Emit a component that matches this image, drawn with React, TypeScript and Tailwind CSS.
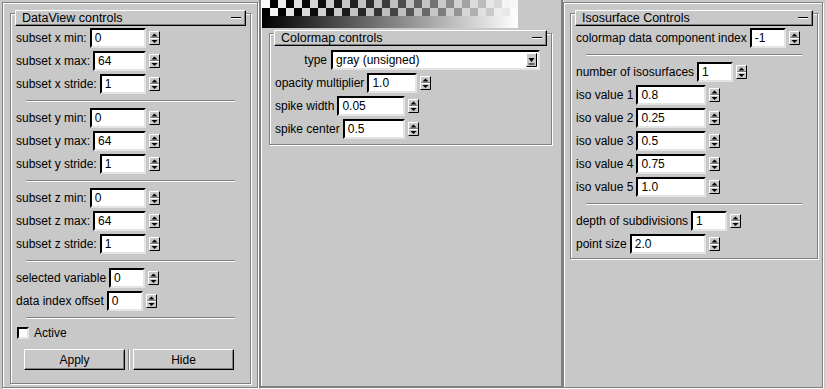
import React from 'react'

const groove = 'border border-[#808080] shadow-[inset_1px_1px_0_#fff,1px_1px_0_#fff]'
const raised = 'border border-t-white border-l-white border-r-black border-b-black shadow-[inset_-1px_-1px_0_#808080]'
const sunken = 'border-2 border-t-black border-l-black border-r-[#e4e4e4] border-b-[#e4e4e4] bg-white'

type RowDef = { label: string; value: string; w?: string }

const Spinner = () => (
  <svg width="11" height="14" viewBox="0 0 11 14" className="ml-[3px] shrink-0">
    <rect x="0" y="0" width="11" height="14" fill="#c8c8c8" />
    <path d="M0.5 13.5V0.5H10.5" stroke="#fff" fill="none" />
    <path d="M0.5 13.5H10.5V0.5" stroke="#000" fill="none" />
    <path d="M1 6.5H10" stroke="#808080" />
    <path d="M1 7.5H10" stroke="#fff" />
    <path d="M2.5 5.5L5.5 2.5L8.5 5.5Z" fill="#000" />
    <path d="M2.5 9L8.5 9L5.5 12Z" fill="#000" />
  </svg>
)

const Field = ({ value, className }: { value: string; className: string }) => (
  <div className={`h-[20px] ${sunken} pl-[3px] leading-[16px] ${className}`}>{value}</div>
)

const Row = ({ row }: { row: RowDef }) => (
  <div className="flex h-[20px] items-center">
    {row.w ? (
      <>
        <span className="whitespace-nowrap">{row.label}</span>
        <Field value={row.value} className={`ml-[3px] ${row.w}`} />
      </>
    ) : (
      <div className="flex w-[130px] items-center">
        <span className="whitespace-nowrap">{row.label}</span>
        <Field value={row.value} className="ml-[3px] min-w-0 flex-1" />
      </div>
    )}
    <Spinner />
  </div>
)

const Rows = ({ rows }: { rows: RowDef[] }) => (
  <div className="flex flex-col gap-[3px]">
    {rows.map((r) => (
      <Row key={r.label} row={r} />
    ))}
  </div>
)

// etched horizontal rule between groups of fields
const Sep = () => <div className="ml-[10px] mr-[15px] my-[6px] h-[2px] border-t border-b border-t-[#808080] border-b-white" />

const Title = ({ text }: { text: string }) => (
  <div className={`-mt-[4px] mx-[4px] flex h-[16px] items-center justify-between pl-[6px] pr-[4px] bg-[#c8c8c8] ${raised}`}>
    <span className="text-[12.5px]">{text}</span>
    <div className="h-[2px] w-[10px] border-t border-b border-t-black border-b-white" />
  </div>
)

const Colormap = () => {
  const cells: React.ReactNode[] = []
  for (let i = 0; i < 32; i++) {
    const g = (i * 8 + 4) / 256
    for (let r = 0; r < 2; r++) {
      const ch = (i + r) % 2 === 0 ? 1 : 0
      const v = Math.round((g * g + ch * (1 - g)) * 255)
      cells.push(<rect key={`${i}-${r}`} x={i * 8} y={r * 8} width="8" height="8" fill={`rgb(${v},${v},${v})`} />)
    }
  }
  return (
    <svg width="256" height="28" viewBox="0 0 256 28" className="block">
      <defs>
        <linearGradient id="cmap" x1="0" x2="1" y1="0" y2="0">
          <stop offset="0" stopColor="#000" />
          <stop offset="1" stopColor="#fff" />
        </linearGradient>
      </defs>
      {cells}
      <rect x="0" y="16" width="256" height="12" fill="url(#cmap)" />
    </svg>
  )
}

const xRows: RowDef[] = [
  { label: 'subset x min:', value: '0' },
  { label: 'subset x max:', value: '64' },
  { label: 'subset x stride:', value: '1' },
]
const yRows: RowDef[] = [
  { label: 'subset y min:', value: '0' },
  { label: 'subset y max:', value: '64' },
  { label: 'subset y stride:', value: '1' },
]
const zRows: RowDef[] = [
  { label: 'subset z min:', value: '0' },
  { label: 'subset z max:', value: '64' },
  { label: 'subset z stride:', value: '1' },
]
const varRows: RowDef[] = [
  { label: 'selected variable', value: '0', w: 'w-[36px]' },
  { label: 'data index offset', value: '0', w: 'w-[36px]' },
]

const isoRows: RowDef[] = [
  { label: 'number of isosurfaces', value: '1', w: 'w-[36px]' },
  { label: 'iso value 1', value: '0.8' },
  { label: 'iso value 2', value: '0.25' },
  { label: 'iso value 3', value: '0.5' },
  { label: 'iso value 4', value: '0.75' },
  { label: 'iso value 5', value: '1.0' },
]

const cmapRows: RowDef[] = [
  { label: 'opacity multiplier', value: '1.0', w: 'w-[50px]' },
  { label: 'spike width', value: '0.05' },
  { label: 'spike center', value: '0.5' },
]

export default function App() {
  return (
    <div className="flex h-[389px] w-[825px] overflow-hidden bg-[#c8c8c8] font-['Liberation_Sans',Arial,sans-serif] text-[12px] leading-none text-black">
      {/* dataview */}
      <div className="w-[259px] shrink-0 pl-[2px] pr-[1px] pt-[2px] pb-[1px]">
        <div className={`h-full ${groove} pt-[10px]`}>
          <div className={`ml-[7px] h-[371px] w-[241px] ${groove}`}>
            <Title text="DataView controls" />
            <div className="mt-[2px] flex flex-col pl-[5px]">
              <Rows rows={xRows} />
              <Sep />
              <Rows rows={yRows} />
              <Sep />
              <Rows rows={zRows} />
              <Sep />
              <Rows rows={varRows} />
              <Sep />
              <div className="flex h-[16px] items-center">
                <div className={`ml-[1px] h-[12px] w-[12px] ${sunken}`} />
                <span className="ml-[5px]">Active</span>
              </div>
              <div className="mt-[8px] ml-[8px] flex h-[21px] items-stretch">
                <div className={`flex w-[101px] items-center justify-center ${raised}`}>Apply</div>
                <div className="mx-[3px] w-[2px] border-l border-r border-l-[#808080] border-r-white" />
                <div className={`flex w-[101px] items-center justify-center ${raised}`}>Hide</div>
              </div>
            </div>
          </div>
        </div>
      </div>

      {/* colormap */}
      <div className="w-[304px] shrink-0 pb-[1px]">
        <div className="h-full border-2 border-t-0 border-[#808080] shadow-[inset_1px_0_0_#fff,1px_1px_0_#fff]">
          <div className="ml-[1px]">
            <Colormap />
          </div>
          <div className={`mt-[5px] ml-[8px] h-[112px] w-[283px] ${groove}`}>
            <Title text="Colormap controls" />
            <div className="mt-[4px] flex flex-col gap-[3px] pl-[5px]">
              <div className="flex h-[20px] items-center">
                <span className="w-[52px] text-right">type</span>
                <div className={`ml-[4px] flex h-[20px] w-[209px] items-center justify-between ${sunken} pl-[3px] pr-[1px]`}>
                  <span>gray (unsigned)</span>
                  <svg width="11" height="14" viewBox="0 0 11 14">
                    <rect x="0" y="0" width="11" height="14" fill="#c8c8c8" />
                    <path d="M0.5 13.5V0.5H10.5" stroke="#fff" fill="none" />
                    <path d="M0.5 13.5H10.5V0.5" stroke="#000" fill="none" />
                    <path d="M2.5 5L8.5 5L5.5 9Z" fill="#000" />
                    <path d="M2.5 11H8.5" stroke="#000" />
                  </svg>
                </div>
              </div>
              <Rows rows={cmapRows} />
            </div>
          </div>
        </div>
      </div>

      {/* isosurface */}
      <div className="w-[262px] shrink-0 pt-[2px] pr-[2px] pb-[1px]">
        <div className={`h-full ${groove} pt-[10px]`}>
          <div className={`ml-[6px] h-[246px] w-[248px] ${groove}`}>
            <Title text="Isosurface Controls" />
            <div className="mt-[2px] flex flex-col pl-[5px]">
              <Row row={{ label: 'colormap data component index', value: '-1', w: 'w-[36px]' }} />
              <Sep />
              <Rows rows={isoRows} />
              <Sep />
              <Rows
                rows={[
                  { label: 'depth of subdivisions', value: '1', w: 'w-[36px]' },
                  { label: 'point size', value: '2.0' },
                ]}
              />
            </div>
          </div>
        </div>
      </div>
    </div>
  )
}
